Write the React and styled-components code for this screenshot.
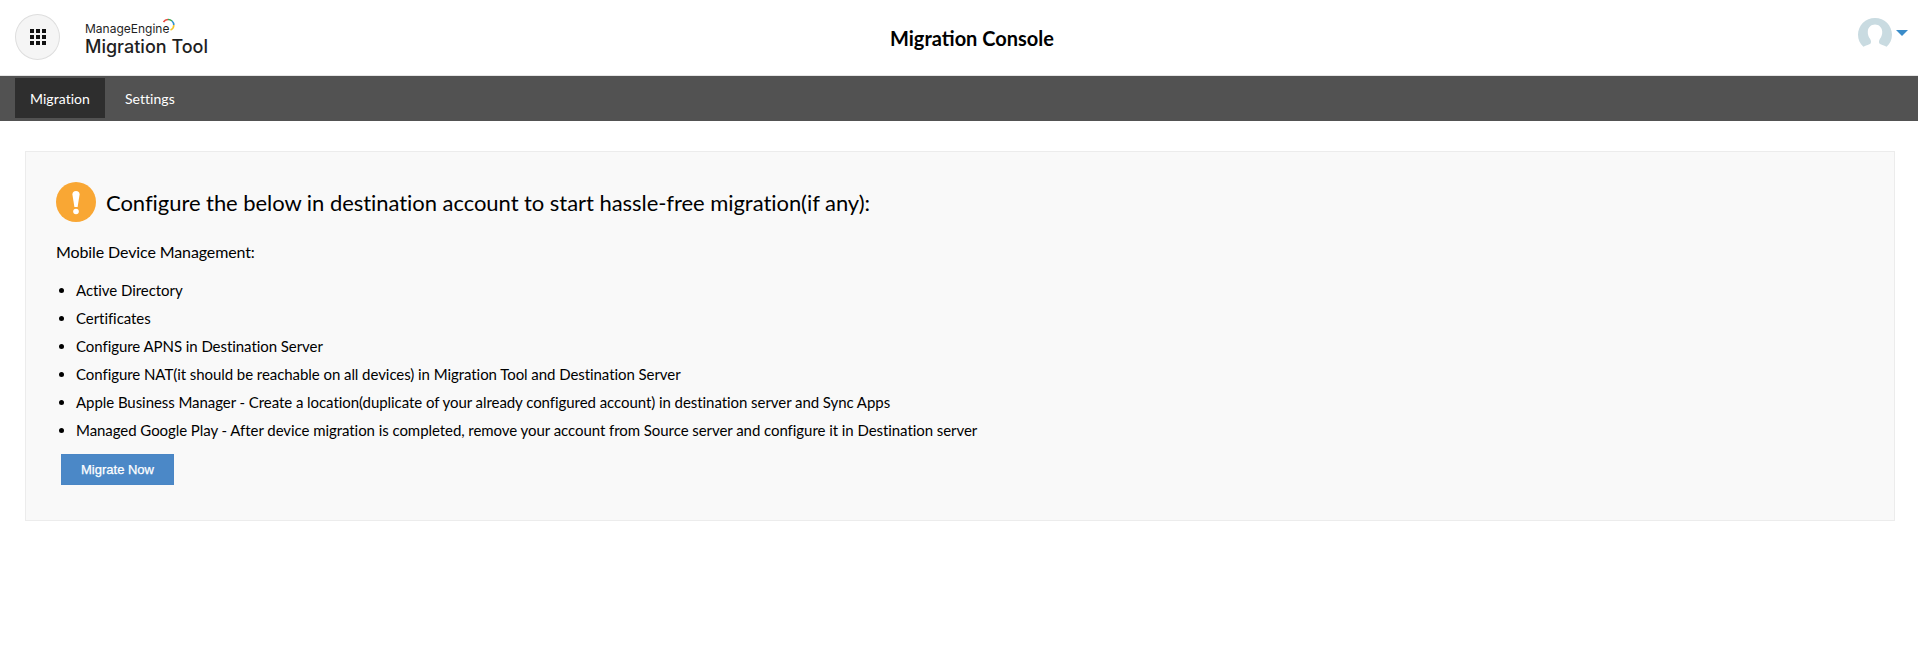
import React from "react";
import styled, { createGlobalStyle } from "styled-components";

const GlobalStyle = createGlobalStyle`
html, body {
  margin: 0;
  padding: 0;
  background: #fff;
  font-family: Lato, "Liberation Sans", sans-serif;
  color: #000;
}
`;

const Header = styled.header`
  height: 75px;
  display: flex;
  align-items: center;
  padding: 0 10px 0 15px;
  position: relative;
  background: #fff;
  border-bottom: 1px solid #e6e6e6;
`;

const GridButton = styled.button`
  width: 45px;
  height: 46px;
  border-radius: 50%;
  border: 1px solid #dedede;
  background: #f5f5f5;
  padding: 0;
  display: flex;
  align-items: center;
  justify-content: center;
  margin-bottom: 1px;
`;

const Logo = styled.div`
  margin-left: 25px;
  margin-top: 4px;
  display: flex;
  flex-direction: column;
  color: #1f1f1f;
`;

const LogoTop = styled.div`
  display: flex;
  align-items: flex-start;
  height: 15px;
  font-family: Inter, sans-serif;
  font-size: 12px;
  line-height: 15px;
  font-weight: 400;
`;

const LogoName = styled.div`
  font-family: Inter, sans-serif;
  font-size: 18px;
  line-height: 22px;
  font-weight: 500;
`;

const Title = styled.h1`
  position: absolute;
  left: 26px;
  right: 0;
  top: 26px;
  margin: 0;
  text-align: center;
  font-size: 20px;
  line-height: 24px;
  font-weight: 700;
  pointer-events: none;
`;

const UserMenu = styled.div`
  margin-left: auto;
  display: flex;
  align-items: center;
  gap: 4px;
  margin-bottom: 9px;
`;

const Caret = styled.span`
  width: 0;
  height: 0;
  border-left: 6.5px solid transparent;
  border-right: 6.5px solid transparent;
  border-top: 6px solid #3a8cc9;
`;

const Nav = styled.nav`
  height: 45px;
  background: #525252;
  display: flex;
  padding: 2px 0 3px 15px;
  box-sizing: border-box;
`;

const NavItem = styled.a`
  display: flex;
  align-items: center;
  padding: 0 15px;
  font-size: 14px;
  letter-spacing: 0.05px;
  font-weight: 400;
  color: #fff;
  background: ${(p) => (p.$active ? "#2e2e2e" : "transparent")};
  margin-right: ${(p) => (p.$active ? "5px" : "0")};
`;

const Main = styled.main`
  padding: 30px 23px 0 25px;
`;

const Card = styled.section`
  box-sizing: border-box;
  height: 370px;
  background: #f9f9f9;
  border: 1px solid #ececec;
  padding: 30px 30px 0;
`;

const Heading = styled.div`
  display: flex;
  align-items: center;
  gap: 10px;
  height: 40px;
  font-size: 22px;
  letter-spacing: -0.05px;
`;

const SubTitle = styled.p`
  margin: 20px 0 0;
  font-size: 16px;
  line-height: 20px;
  letter-spacing: -0.11px;
`;

const List = styled.ul`
  margin: 18px 0 0;
  padding: 0 0 0 20px;
  list-style: disc;
`;

const Item = styled.li`
  font-size: 15px;
  line-height: 20px;
  margin-bottom: 8px;
  letter-spacing: -0.06px;
`;

const MigrateButton = styled.button`
  display: block;
  width: 113px;
  height: 31px;
  margin: 14px 0 0 5px;
  border: 1px solid #4a86c5;
  background: #4b88c7;
  color: #fff;
  font-family: "Liberation Sans", Arial, sans-serif;
  font-size: 13px;
  font-weight: 400;
  -webkit-text-stroke: 0.25px #fff;
  padding: 0;
`;

const GridIcon = () => (
  <svg width="16" height="16" viewBox="0 0 16 16" fill="#111">
    {[0, 6, 12].map((y) =>
      [0, 6, 12].map((x) => <rect key={x + "-" + y} x={x} y={y} width="4" height="4" />)
    )}
  </svg>
);

// little colour swoosh over the last letters of the logo
const Swoosh = () => (
  <svg width="13" height="15" viewBox="0 0 13 15" fill="none" strokeWidth="1.6" style={{ marginLeft: -7, marginTop: -3 }}>
    <path d="M1.5 4 A5.5 5.5 0 0 1 6 1.5" stroke="#e8473f" />
    <path d="M6 1.5 A5.5 5.5 0 0 1 10 3" stroke="#3aa655" />
    <path d="M10 3 A5.5 5.5 0 0 1 11.8 7" stroke="#2c8fd0" />
    <path d="M11.8 7 A5.5 5.5 0 0 1 8.5 12" stroke="#f4c52c" />
  </svg>
);

const Avatar = () => (
  <svg width="34" height="30" viewBox="0 0 34 30">
    <path
      d="M17 0 C26.4 0 34 7.4 34 16.8 C34 21.6 32 25.8 28.6 28.8 C26 27.2 22.4 26.6 21.4 25.4 C20.6 24.2 21 22.4 22 20.8 C23.6 18.6 24.4 16 24.2 13.4 C23.8 9.4 21 6.6 17 6.6 C13 6.6 10.2 9.4 9.8 13.4 C9.6 16 10.4 18.6 12 20.8 C13 22.4 13.4 24.2 12.6 25.4 C11.6 26.6 8 27.2 5.4 28.8 C2 25.8 0 21.6 0 16.8 C0 7.4 7.6 0 17 0 Z"
      fill="#c9dbe1"
    />
  </svg>
);

const WarningIcon = () => (
  <svg width="40" height="40" viewBox="0 0 40 40">
    <circle cx="20" cy="20" r="20" fill="#f9a734" />
    <path d="M16.4 12.5 a3.6 3.6 0 0 1 7.2 0 L21.6 25 h-3.2 Z" fill="#fff" />
    <circle cx="20" cy="29.5" r="2.8" fill="#fff" />
  </svg>
);

const items = [
  "Active Directory",
  "Certificates",
  "Configure APNS in Destination Server",
  "Configure NAT(it should be reachable on all devices) in Migration Tool and Destination Server",
  "Apple Business Manager - Create a location(duplicate of your already configured account) in destination server and Sync Apps",
  "Managed Google Play - After device migration is completed, remove your account from Source server and configure it in Destination server",
];

const App = () => {
  return (
    <>
      <GlobalStyle />
      <Header>
        <GridButton type="button">
          <GridIcon />
        </GridButton>
        <Logo>
          <LogoTop>
            ManageEngine
            <Swoosh />
          </LogoTop>
          <LogoName>Migration Tool</LogoName>
        </Logo>
        <Title>Migration Console</Title>
        <UserMenu>
          <Avatar />
          <Caret />
        </UserMenu>
      </Header>
      <Nav>
        <NavItem $active>Migration</NavItem>
        <NavItem>Settings</NavItem>
      </Nav>
      <Main>
        <Card>
          <Heading>
            <WarningIcon />
            Configure the below in destination account to start hassle-free migration(if any):
          </Heading>
          <SubTitle>Mobile Device Management:</SubTitle>
          <List>
            {items.map((item) => (
              <Item key={item}>{item}</Item>
            ))}
          </List>
          <MigrateButton type="button">Migrate Now</MigrateButton>
        </Card>
      </Main>
    </>
  );
};

export default App;
